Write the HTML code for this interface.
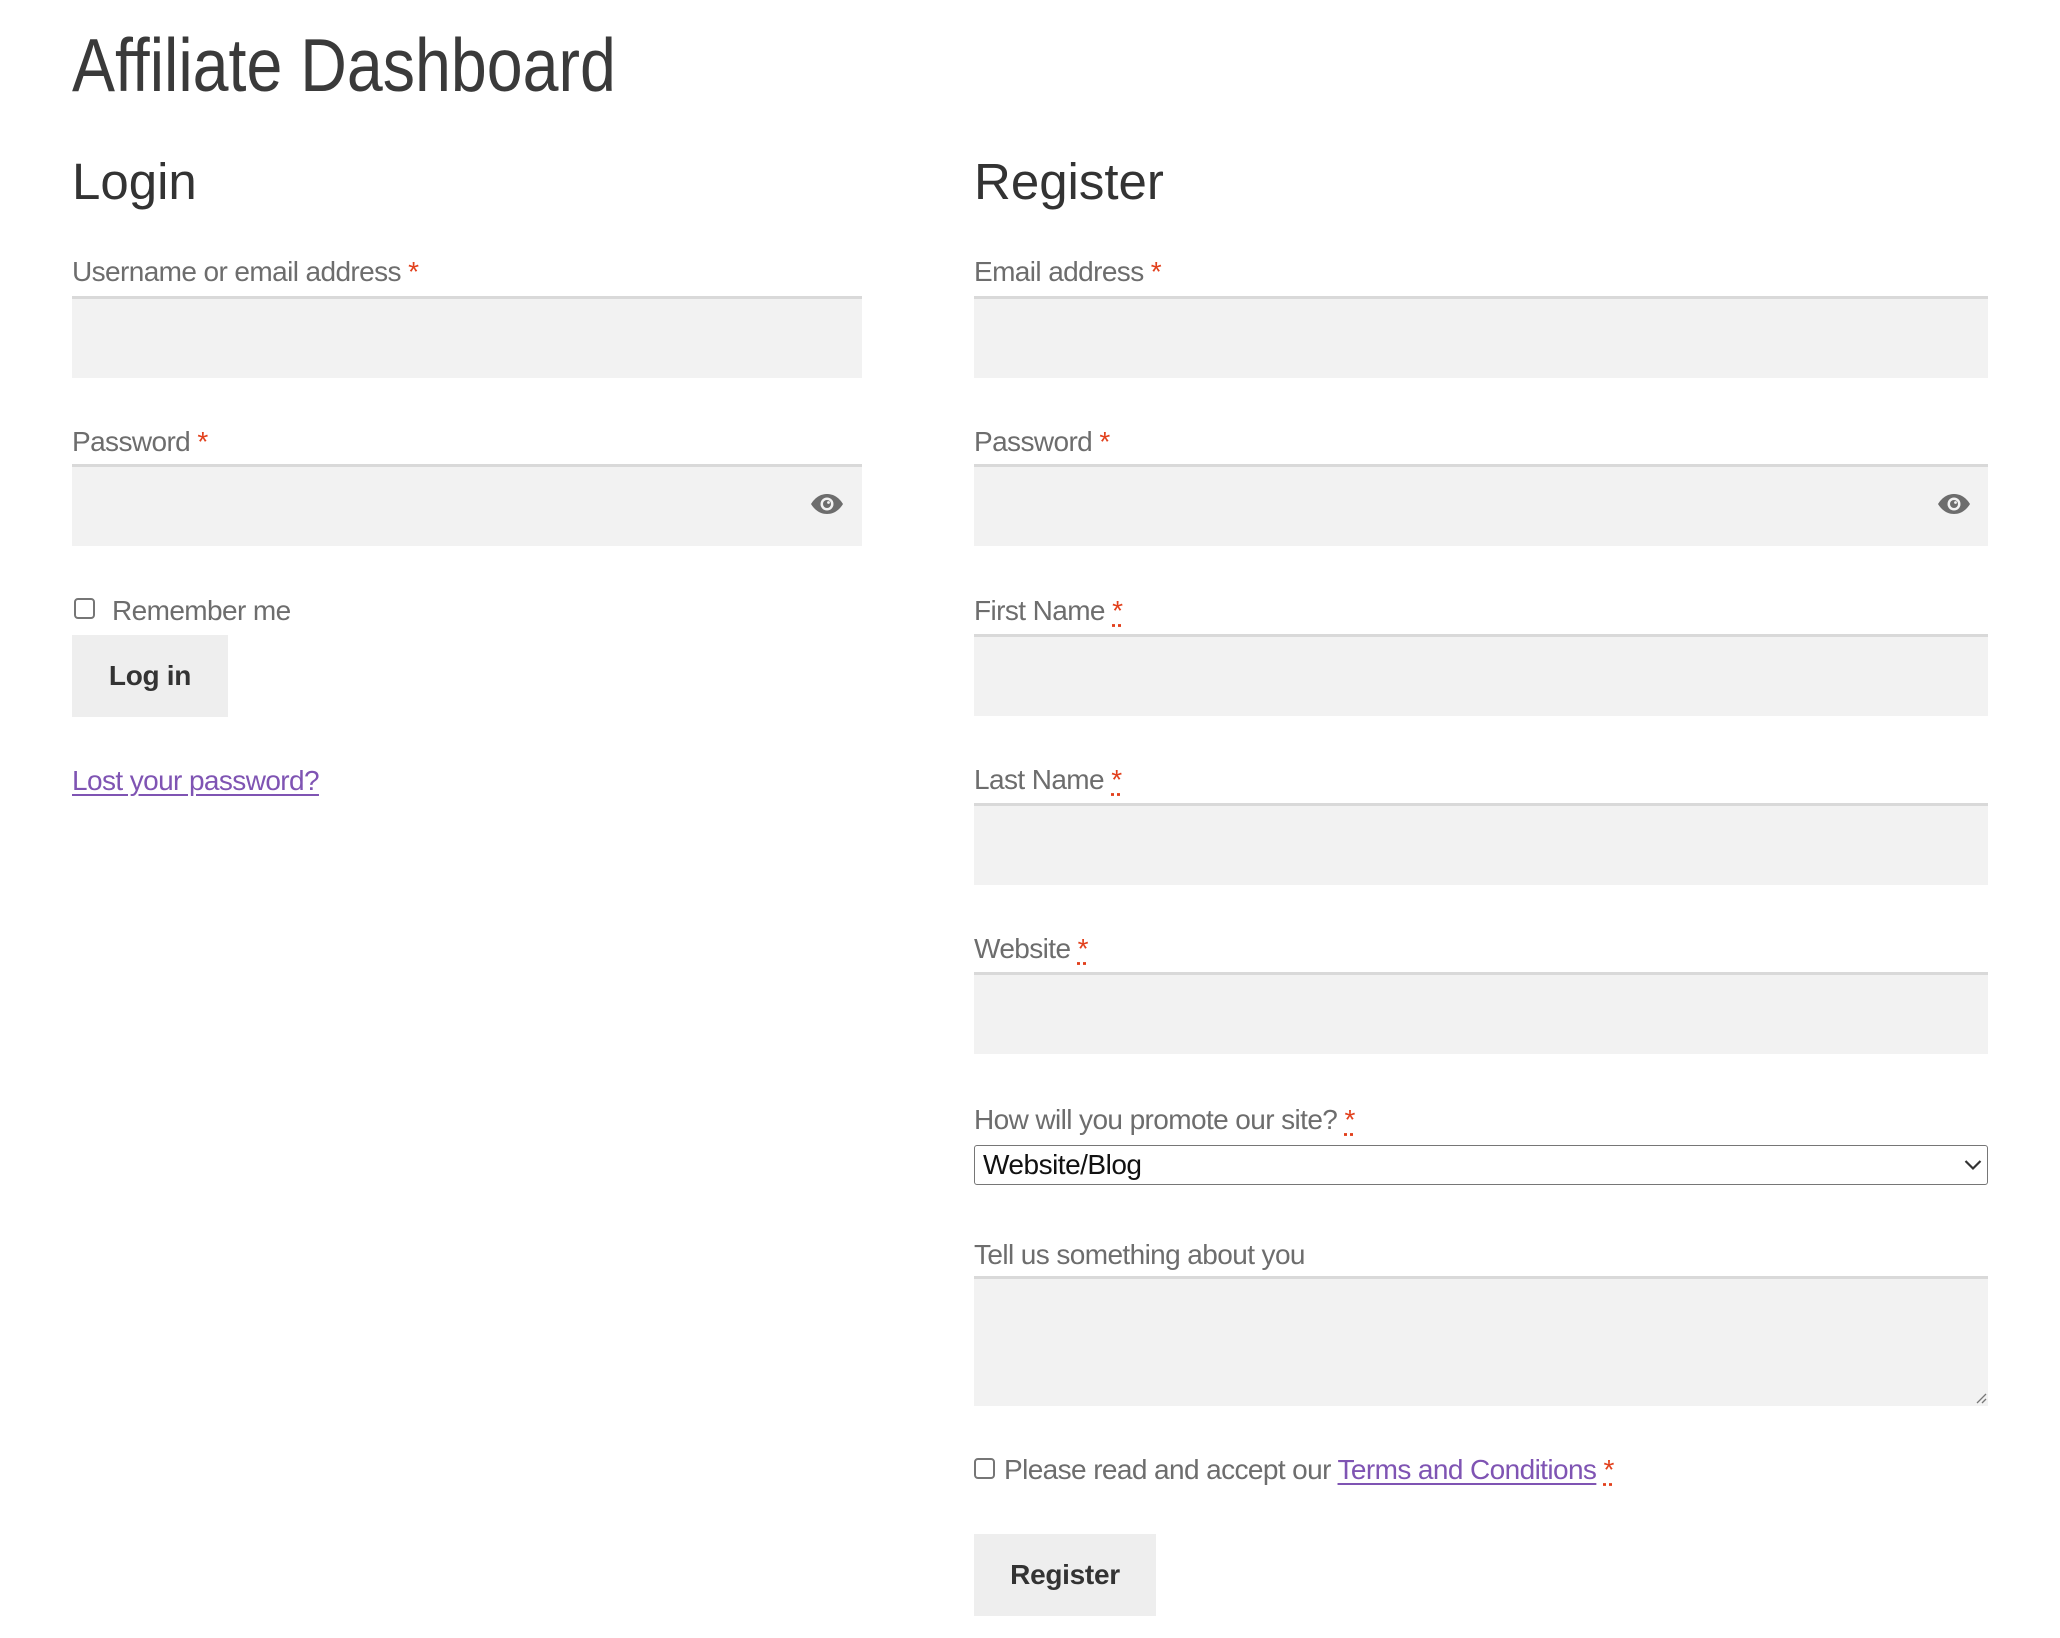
<!DOCTYPE html>
<html><head><meta charset="utf-8"><style>
html,body{margin:0;padding:0;background:#fff;width:2060px;height:1638px;overflow:hidden;position:relative;font-family:"Liberation Sans",sans-serif}
.a{position:absolute;white-space:nowrap}
.t{left:72px;top:20px;font-size:75px;line-height:90px;color:#3a3a3a;transform:scaleX(0.86);transform-origin:0 0;letter-spacing:0px}
.h{font-size:51px;line-height:60px;color:#333}
.l{font-size:28px;line-height:36px;color:#6d6d6d;letter-spacing:-0.6px}
.r{color:#e2401c}
.rd{color:#e2401c;text-decoration:underline dotted;text-underline-offset:4px}
.i{background:#f2f2f2;box-shadow:inset 0 3px 0 #d9d9d9;height:82px}
.L{left:72px;width:790px}
.R{left:974px;width:1014px}
.b{background:#eeeeee;color:#333;font-weight:bold;font-size:28px;text-align:center;letter-spacing:-0.3px}
.cb{width:17px;height:17px;border:2px solid #767676;border-radius:4px;background:#fff}
.lk{color:#7f54b3;text-decoration:underline;text-underline-offset:4px}
</style></head><body>
<div class="a t">Affiliate Dashboard</div>
<div class="a h" style="left:72px;top:152px">Login</div>
<div class="a h" style="left:974px;top:152px">Register</div>

<div class="a l" style="left:72px;top:254px">Username or email address <span class="r">*</span></div>
<div class="a i L" style="top:296px"></div>
<div class="a l" style="left:72px;top:424px">Password <span class="r">*</span></div>
<div class="a i L" style="top:464px"></div>
<svg class="a" style="left:810px;top:493px" width="34" height="22" viewBox="0 0 34 22"><path d="M1 11C6 3 12 1 17 1s11 2 16 10c-5 8-11 10-16 10S6 19 1 11z" fill="#6d6d6d"/><circle cx="17" cy="11" r="6.5" fill="#f2f2f2"/><circle cx="17" cy="11" r="4" fill="#6d6d6d"/><circle cx="18.5" cy="9.5" r="1.4" fill="#f2f2f2"/></svg>
<div class="a cb" style="left:74px;top:598px"></div>
<div class="a l" style="left:112px;top:593px">Remember me</div>
<div class="a b" style="left:72px;top:635px;width:156px;height:82px;line-height:82px">Log in</div>
<div class="a l lk" style="left:72px;top:763px;color:#7f54b3">Lost your password?</div>

<div class="a l" style="left:974px;top:254px">Email address <span class="r">*</span></div>
<div class="a i R" style="top:296px"></div>
<div class="a l" style="left:974px;top:424px">Password <span class="r">*</span></div>
<div class="a i R" style="top:464px"></div>
<svg class="a" style="left:1937px;top:493px" width="34" height="22" viewBox="0 0 34 22"><path d="M1 11C6 3 12 1 17 1s11 2 16 10c-5 8-11 10-16 10S6 19 1 11z" fill="#6d6d6d"/><circle cx="17" cy="11" r="6.5" fill="#f2f2f2"/><circle cx="17" cy="11" r="4" fill="#6d6d6d"/><circle cx="18.5" cy="9.5" r="1.4" fill="#f2f2f2"/></svg>
<div class="a l" style="left:974px;top:593px">First Name <span class="rd">*</span></div>
<div class="a i R" style="top:634px"></div>
<div class="a l" style="left:974px;top:762px">Last Name <span class="rd">*</span></div>
<div class="a i R" style="top:803px"></div>
<div class="a l" style="left:974px;top:931px">Website <span class="rd">*</span></div>
<div class="a i R" style="top:972px"></div>
<div class="a l" style="left:974px;top:1102px">How will you promote our site? <span class="rd">*</span></div>
<div class="a R" style="top:1145px;border:1px solid #767676;border-radius:3px;box-sizing:border-box;height:40px"></div>
<div class="a" style="left:983px;top:1146px;font-size:28px;line-height:38px;color:#111;letter-spacing:-0.5px">Website/Blog</div>
<svg class="a" style="left:1964px;top:1159px" width="18" height="12" viewBox="0 0 18 12"><path d="M1.5 2l7.5 7.5L16.5 2" fill="none" stroke="#333" stroke-width="2.2"/></svg>
<div class="a l" style="left:974px;top:1237px">Tell us something about you</div>
<div class="a R" style="top:1276px;height:130px;background:#f2f2f2;box-shadow:inset 0 3px 0 #d9d9d9"></div>
<svg class="a" style="left:1973px;top:1390px" width="14" height="14" viewBox="0 0 14 14"><path d="M13 4L4 13M13 9L9 13" stroke="#777" stroke-width="1.3"/></svg>
<div class="a cb" style="left:974px;top:1458px"></div>
<div class="a l" style="left:1004px;top:1452px">Please read and accept our <span class="lk">Terms and Conditions</span> <span class="rd">*</span></div>
<div class="a b" style="left:974px;top:1534px;width:182px;height:82px;line-height:82px">Register</div>
</body></html>
